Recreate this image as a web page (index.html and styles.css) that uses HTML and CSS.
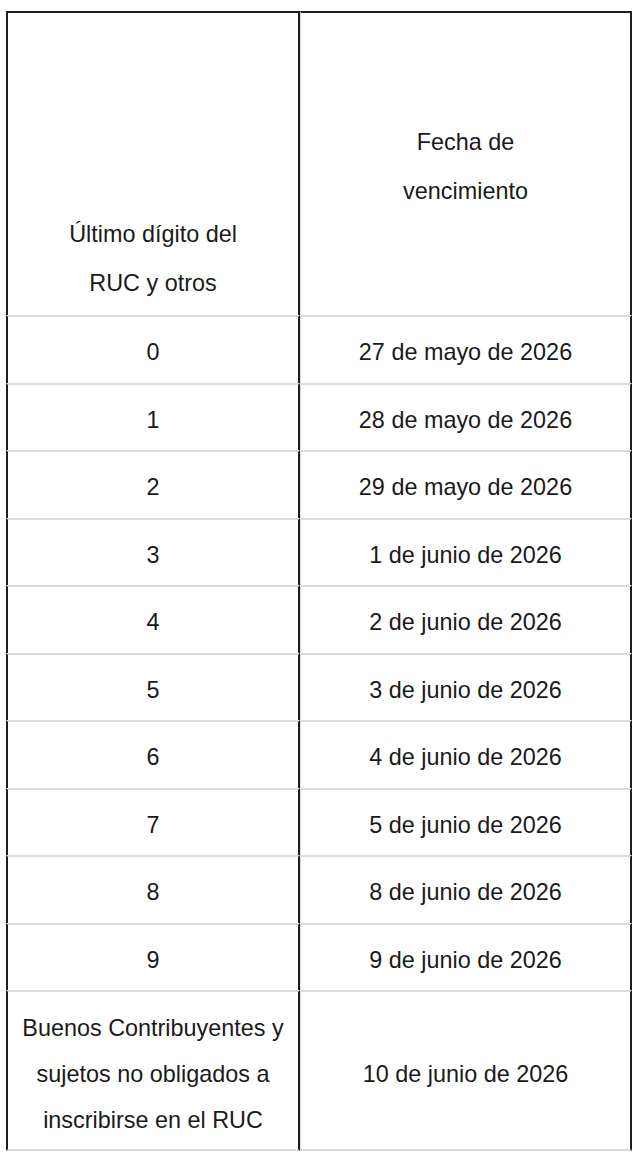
FILE: index.html
```html
<!DOCTYPE html>
<html lang="es">
<head>
<meta charset="utf-8">
<title>Cronograma de vencimientos</title>
<link rel="stylesheet" href="styles.css">
</head>
<body>
<table class="schedule">
  <thead>
    <tr>
      <th class="col-a head-a">Último dígito del<br>RUC y otros</th>
      <th class="col-b head-b">Fecha de<br>vencimiento</th>
    </tr>
  </thead>
  <tbody>
    <tr><td class="col-a">0</td><td class="col-b">27 de mayo de 2026</td></tr>
    <tr><td class="col-a">1</td><td class="col-b">28 de mayo de 2026</td></tr>
    <tr><td class="col-a">2</td><td class="col-b">29 de mayo de 2026</td></tr>
    <tr><td class="col-a">3</td><td class="col-b">1 de junio de 2026</td></tr>
    <tr><td class="col-a">4</td><td class="col-b">2 de junio de 2026</td></tr>
    <tr><td class="col-a">5</td><td class="col-b">3 de junio de 2026</td></tr>
    <tr><td class="col-a">6</td><td class="col-b">4 de junio de 2026</td></tr>
    <tr><td class="col-a">7</td><td class="col-b">5 de junio de 2026</td></tr>
    <tr><td class="col-a">8</td><td class="col-b">8 de junio de 2026</td></tr>
    <tr><td class="col-a">9</td><td class="col-b">9 de junio de 2026</td></tr>
    <tr class="last"><td class="col-a">Buenos Contribuyentes y<br>sujetos no obligados a<br>inscribirse en el RUC</td><td class="col-b">10 de junio de 2026</td></tr>
  </tbody>
</table>
</body>
</html>
```

FILE: styles.css
```css
html, body {
  margin: 0;
  padding: 0;
  background: #ffffff;
}

.schedule {
  margin: 11px 0 0 6px;
  border-collapse: separate;
  border-spacing: 0;
  font-family: "Liberation Sans", Arial, sans-serif;
  font-size: 23.4px;
  color: #1a1a1a;
  table-layout: fixed;
}

.schedule th,
.schedule td {
  box-sizing: border-box;
  padding: 13px 4px 7px;
  line-height: 45.5px;
  text-align: center;
  font-weight: normal;
  border-top: 2px solid #dcdcdc;
}

.col-a {
  width: 294px;
  border-left: 2px solid #1e1e1e;
  border-right: 2px solid #1e1e1e;
}

.col-b {
  width: 332px;
  border-left: 1px solid #dcdcdc;
  border-right: 2px solid #1e1e1e;
}

.schedule thead th {
  border-top: 2px solid #1e1e1e;
  height: 304px;
  line-height: 49px;
}

.head-a {
  vertical-align: bottom;
  padding-bottom: 0;
}

.head-b {
  vertical-align: middle;
  padding-top: 14px;
  padding-bottom: 10px;
  line-height: 51px;
}

.schedule td {
  vertical-align: middle;
}

.last td {
  padding-top: 13px;
  padding-bottom: 6px;
  line-height: 46px;
  border-bottom: 2px solid #dcdcdc;
}
```
